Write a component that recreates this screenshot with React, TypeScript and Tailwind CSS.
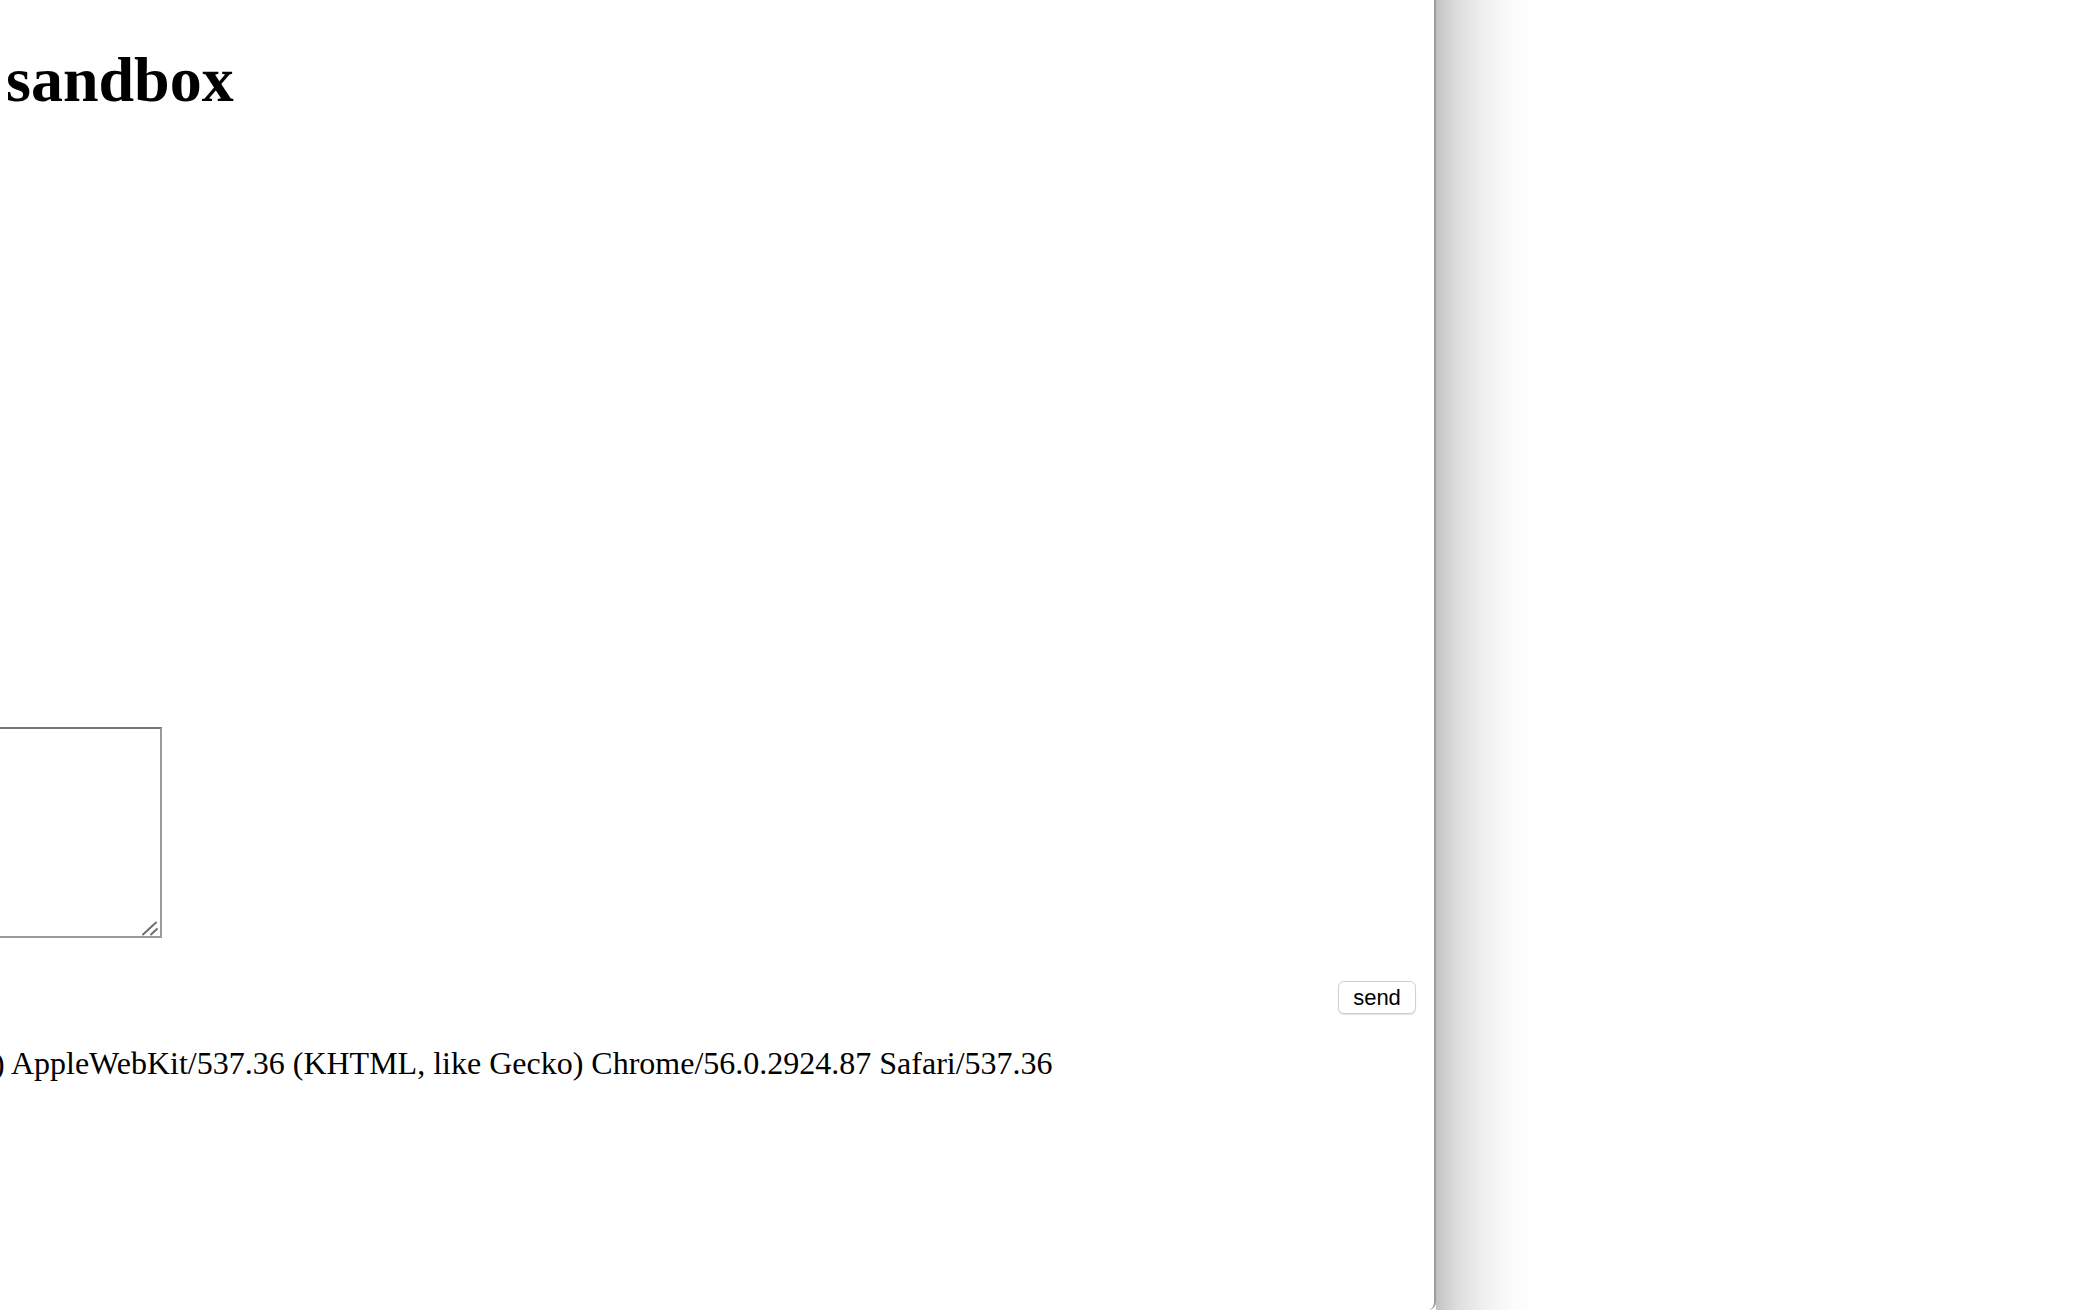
const UA_TAIL =
  ") AppleWebKit/537.36 (KHTML, like Gecko) Chrome/56.0.2924.87 Safari/537.36";

function ResizeGrip() {
  return (
    <svg
      className="pointer-events-none absolute right-[2px] bottom-[2px]"
      width="18"
      height="16"
      viewBox="0 0 18 16"
      aria-hidden="true"
    >
      <path d="M1 14.5 L14 2.5" stroke="#6f6f6f" strokeWidth="2" strokeLinecap="round" />
      <path d="M9 14.5 L15 9" stroke="#6f6f6f" strokeWidth="2" strokeLinecap="round" />
    </svg>
  );
}

export default function App() {
  return (
    <div className="flex h-[1310px] w-[2100px] overflow-hidden bg-white">
      <div className="flex w-[1436px] shrink-0 flex-col overflow-hidden rounded-br-[8px] border-r-2 border-[#9c9c9c] bg-white text-black [font-family:'Liberation_Serif','Times_New_Roman',serif]">
        <h1 className="mt-[43px] pl-[6px] text-[64px] font-bold leading-[74px]">sandbox</h1>

        <div className="relative mt-[610px] -ml-[100px] h-[211px] w-[262px] shrink-0">
          <textarea
            className="block h-full w-full resize-none border-2 border-[#9a9a9a] border-t-[#737373] bg-white outline-none"
            aria-label="message"
          />
          <ResizeGrip />
        </div>

        <button
          type="button"
          className="mt-[43px] mr-[18px] h-[33px] w-[78px] self-end rounded-[6px] border border-[#cfcfcf] bg-white text-[22px] leading-none text-black shadow-[0_1px_1px_rgba(0,0,0,0.12)] [font-family:'Liberation_Sans',Arial,sans-serif]"
        >
          send
        </button>

        <p className="mt-[31px] -ml-[6px] whitespace-nowrap text-[32px] leading-[37px]">{UA_TAIL}</p>
      </div>
      <div className="h-full w-[100px] shrink-0 bg-[linear-gradient(to_right,#c2c2c2,#dcdcdc_20%,#eeeeee_45%,#fbfbfb_75%,#ffffff)]" />
    </div>
  );
}
